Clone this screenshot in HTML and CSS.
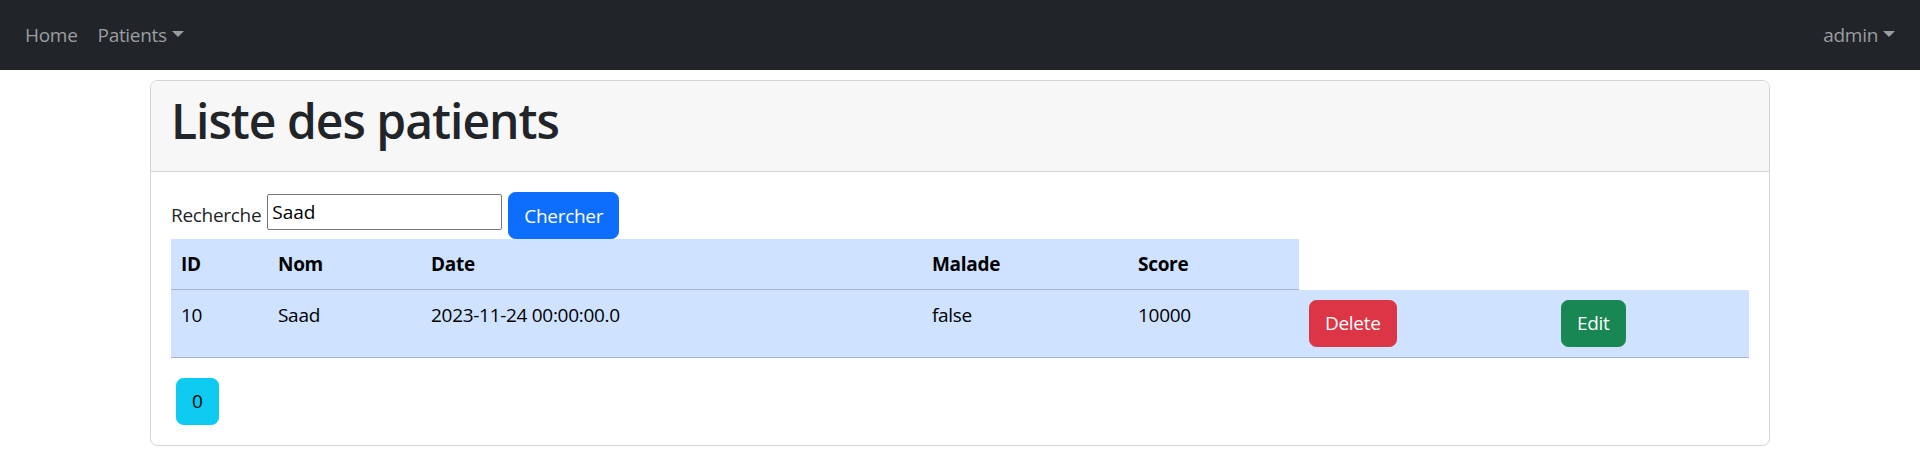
FILE: index.html
```html
<!DOCTYPE html>
<html lang="fr">
<head>
<meta charset="utf-8">
<title>Liste des patients</title>
<link rel="stylesheet" href="styles.css">
</head>
<body>
<nav class="navbar">
  <ul class="nav-list">
    <li><a class="nav-link" href="#">Home</a></li>
    <li><a class="nav-link dropdown-toggle" href="#">Patients</a></li>
  </ul>
  <ul class="nav-list">
    <li><a class="nav-link dropdown-toggle" href="#">admin</a></li>
  </ul>
</nav>
<main class="container">
  <div class="card">
    <div class="card-header">
      <h1 class="title">Liste des patients</h1>
    </div>
    <div class="card-body">
      <form class="search-form">
        <label class="search-label" for="kw">Recherche</label>
        <input class="search-input" id="kw" type="text" value="Saad">
        <button class="btn btn-primary" type="button">Chercher</button>
      </form>
      <table class="table">
        <colgroup>
          <col class="c-id"><col class="c-nom"><col class="c-date"><col class="c-malade"><col class="c-score"><col class="c-del"><col class="c-edit">
        </colgroup>
        <thead>
          <tr><th>ID</th><th>Nom</th><th>Date</th><th>Malade</th><th>Score</th></tr>
        </thead>
        <tbody>
          <tr>
            <td>10</td><td>Saad</td><td>2023-11-24 00:00:00.0</td><td>false</td><td>10000</td>
            <td><a class="btn btn-danger" href="#">Delete</a></td>
            <td><a class="btn btn-success" href="#">Edit</a></td>
          </tr>
        </tbody>
      </table>
      <ul class="pages">
        <li><a class="btn btn-info" href="#">0</a></li>
      </ul>
    </div>
  </div>
</main>
</body>
</html>
```
FILE: styles.css
```css
* { box-sizing: border-box; }
body {
  margin: 0;
  font-family: "Open Sans", "Noto Sans", sans-serif;
  font-size: 19px;
  letter-spacing: -0.3px;
  line-height: 30px;
  color: #212529;
  background: #fff;
}
a { text-decoration: none; }

.navbar {
  display: flex;
  justify-content: space-between;
  align-items: center;
  background: #212529;
  padding: 10px 15px;
}
.nav-list {
  display: flex;
  list-style: none;
  margin: 0;
  padding: 0;
}
.nav-link {
  display: block;
  padding: 10px;
  color: #9b9d9f;
}
.dropdown-toggle::after {
  content: "";
  display: inline-block;
  margin-left: 5px;
  vertical-align: 5px;
  border-top: 6px solid;
  border-left: 6px solid transparent;
  border-right: 6px solid transparent;
}

.container {
  width: 1620px;
  margin: 10px auto 0;
}
.card {
  border: 1px solid #d3d4d5;
  border-radius: 7.5px;
  overflow: hidden;
}
.card-header {
  background: #f7f7f7;
  padding: 10px 20px;
  border-bottom: 1px solid #d3d4d5;
}
.title {
  margin: 0 0 10px;
  font-size: 48px;
  letter-spacing: -1px;
  line-height: 60px;
  font-weight: 600;
  color: #212529;
}
.card-body {
  padding: 20px;
}

.search-form {
  display: flex;
  align-items: flex-start;
  gap: 6px;
}
.search-label {
  padding-top: 8px;
}
.search-input {
  width: 235px;
  height: 36px;
  margin-top: 2px;
  padding: 0 4px;
  border: 1px solid #767676;
  border-radius: 2px;
  font: inherit;
  color: #000;
}

.btn {
  display: inline-block;
  padding: 7.5px 15px;
  border: 1.25px solid transparent;
  border-radius: 7.5px;
  font: inherit;
  letter-spacing: inherit;
  line-height: 30px;
  cursor: pointer;
}
.btn-primary { background: #0d6efd; border-color: #0d6efd; color: #fff; }
.btn-danger { background: #dc3545; border-color: #dc3545; color: #fff; }
.btn-success { background: #198754; border-color: #198754; color: #fff; }
.btn-info { background: #0dcaf0; border-color: #0dcaf0; color: #000; }

.table {
  width: 100%;
  table-layout: fixed;
  border-collapse: collapse;
  margin-bottom: 20px;
  color: #000;
}
.c-id { width: 97px; }
.c-nom { width: 153px; }
.c-date { width: 501px; }
.c-malade { width: 206px; }
.c-score { width: 171px; }
.c-del { width: 252px; }
.c-edit { width: 198px; }
.table th,
.table td {
  padding: 10px;
  text-align: left;
  vertical-align: top;
  background: #cfe2ff;
  border-bottom: 1px solid #a6b5cc;
}
.table th { font-weight: 700; }

.pages {
  list-style: none;
  margin: 0;
  padding: 0;
  display: flex;
}
.pages li { margin-left: 5px; }
```
